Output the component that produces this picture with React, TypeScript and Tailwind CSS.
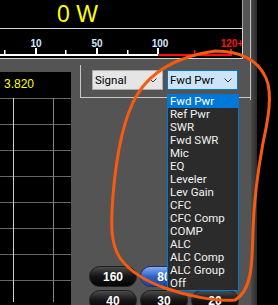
const meterItems = [
  'Fwd Pwr',
  'Ref Pwr',
  'SWR',
  'Fwd SWR',
  'Mic',
  'EQ',
  'Leveler',
  'Lev Gain',
  'CFC',
  'CFC Comp',
  'COMP',
  'ALC',
  'ALC Comp',
  'ALC Group',
  'Off',
];

// third button of the top row sits fully under the open list
const pills = ['160', '80', '', '40', '30', '20'];

function Chevron() {
  return (
    <svg width="8" height="5" viewBox="0 0 8 5" className="shrink-0">
      <path d="M0.5 0.5 L4 4 L7.5 0.5" fill="none" stroke="#3c3c3c" strokeWidth="1" />
    </svg>
  );
}

function Combo({ label, active }: { label: string; active?: boolean }) {
  return (
    <div
      className={`w-[71px] h-[20px] flex items-center justify-between pl-[2px] pr-[5px] border text-[11.5px] leading-[18px] text-black font-['Roboto',sans-serif] ${
        active ? 'bg-[#cce4f7] border-[#0078d7]' : 'bg-[#e5e5e5] border-[#adadad]'
      }`}
    >
      <span>{label}</span>
      <Chevron />
    </div>
  );
}

function Pill({ label, selected }: { label: string; selected?: boolean }) {
  return (
    <div
      className={`h-[21px] rounded-full border flex items-center justify-center text-white font-bold text-[12px] ${
        selected
          ? 'bg-linear-to-b from-[#86adf0] via-[#2f63c4] to-[#1b4291] border-[#16326b]'
          : 'bg-linear-to-b from-[#4c4c4c] via-[#141414] to-[#050505] border-[#1e1e1e]'
      }`}
    >
      {label}
    </div>
  );
}

export default function App() {
  return (
    <div className="relative w-[278px] h-[305px] overflow-hidden bg-black flex font-['Liberation_Sans',Arial,sans-serif]">
      {/* main panel */}
      <div className="w-[250px] flex flex-col bg-[#545454]">
        {/* power readout */}
        <div className="w-[243px] h-[29px] bg-black border-r border-[#a8a8a8] pl-[57px] text-[23px] leading-[28px] text-[#ffff00]">
          0 W
        </div>
        <div className="w-[243px] h-[2px] bg-[#6e6e6e]" />

        {/* scale */}
        <div className="w-[243px] h-[31px] bg-black border-y border-r border-[#d4d4d4]">
          <svg width="242" height="29" viewBox="0 0 242 29">
            <g fontFamily="Liberation Sans, Arial, sans-serif" fontWeight="bold" fontSize="10" textAnchor="middle">
              <text x="36" y="18" fill="#d2e8ff">10</text>
              <text x="97" y="18" fill="#d2e8ff">50</text>
              <text x="160" y="18" fill="#d2e8ff">100</text>
              <text x="232" y="18" fill="#ff1010">120+</text>
            </g>
            <rect x="35" y="19" width="2" height="7" fill="#ffffff" />
            <rect x="96" y="19" width="2" height="7" fill="#ffffff" />
            <rect x="157" y="19" width="2" height="7" fill="#ffffff" />
            <rect x="4" y="21" width="1.5" height="5" fill="#ffffff" />
            <rect x="65" y="21" width="1.5" height="5" fill="#ffffff" />
            <rect x="127" y="21" width="1.5" height="5" fill="#ffffff" />
            <rect x="194" y="21" width="1.5" height="5" fill="#ff1010" />
            <rect x="230" y="20" width="2" height="6" fill="#ff1010" />
            <rect x="0" y="25" width="158" height="2" fill="#ffffff" />
            <rect x="158" y="25" width="74" height="2" fill="#ff1010" />
          </svg>
        </div>

        {/* lower area */}
        <div className="flex-1 flex">
          {/* scope */}
          <div className="w-[71px] mt-[13px] bg-black flex flex-col">
            <div className="h-[26px] pl-[4px] pt-[6px] text-[12px] leading-[12px] text-[#ffff00]">3.820</div>
            <svg width="71" height="204" viewBox="0 0 71 204">
              {[0, 26, 52, 78, 104, 130, 156, 182].map((y) => (
                <line key={y} x1="0" x2="71" y1={y + 0.5} y2={y + 0.5} stroke="#666666" strokeWidth="1" />
              ))}
              <line x1="13.5" x2="13.5" y1="0" y2="204" stroke="#cfcfcf" strokeWidth="1" />
              <line x1="53.5" x2="53.5" y1="0" y2="204" stroke="#858585" strokeWidth="1" />
            </svg>
          </div>

          <div className="flex-1 flex flex-col">
            {/* selectors */}
            <div className="ml-[9px] mt-[6px] h-[33px] border-l border-b border-[#c8c8c8] pl-[11px] pt-[5px] flex gap-[4px]">
              <Combo label="Signal" />
              <Combo label="Fwd Pwr" active />
            </div>

            {/* range buttons */}
            <div className="ml-[18px] mt-[168px] grid grid-cols-[48px_48px_48px] gap-[3px]">
              {pills.map((p, i) => (
                <Pill key={i} label={p} selected={p === '80'} />
              ))}
            </div>
          </div>
        </div>
      </div>

      <div className="w-px flex flex-col">
        <div className="h-[100px] bg-[#c4c4c4]" />
        <div className="flex-1 bg-[#545454]" />
      </div>
      <div className="w-[6px] bg-linear-to-r from-[#4a4a4a] to-[#2c2c2c]" />

      {/* open drop-down */}
      <div className="absolute left-[167px] top-[94px] w-[72px] h-[197px] border border-[#0078d7] bg-[#2b2b2b] font-['Roboto',sans-serif] text-[11.5px] text-[#f2f2f2]">
        {meterItems.map((m, i) => (
          <div key={m} className={`h-[13px] leading-[13px] pl-[2px] ${i === 0 ? 'bg-[#0078d7] text-white' : ''}`}>
            {m}
          </div>
        ))}
      </div>

      {/* hand-drawn annotation */}
      <svg className="absolute inset-0 pointer-events-none" width="278" height="305" viewBox="0 0 278 305">
        <path
          d="M 215 51 C 240 51, 258 60, 266 78 C 273 94, 268 120, 263 143 C 258 170, 254 200, 253 230 C 252 260, 253 290, 235 300 C 215 302, 185 295, 165 288 C 148 282, 130 272, 120 258 C 110 243, 111 222, 113 195 C 116 160, 122 120, 137 95 C 152 70, 180 56, 215 51 Z"
          fill="none"
          stroke="#fa5a0f"
          strokeWidth="3"
          strokeLinecap="round"
          strokeLinejoin="round"
        />
      </svg>
    </div>
  );
}
